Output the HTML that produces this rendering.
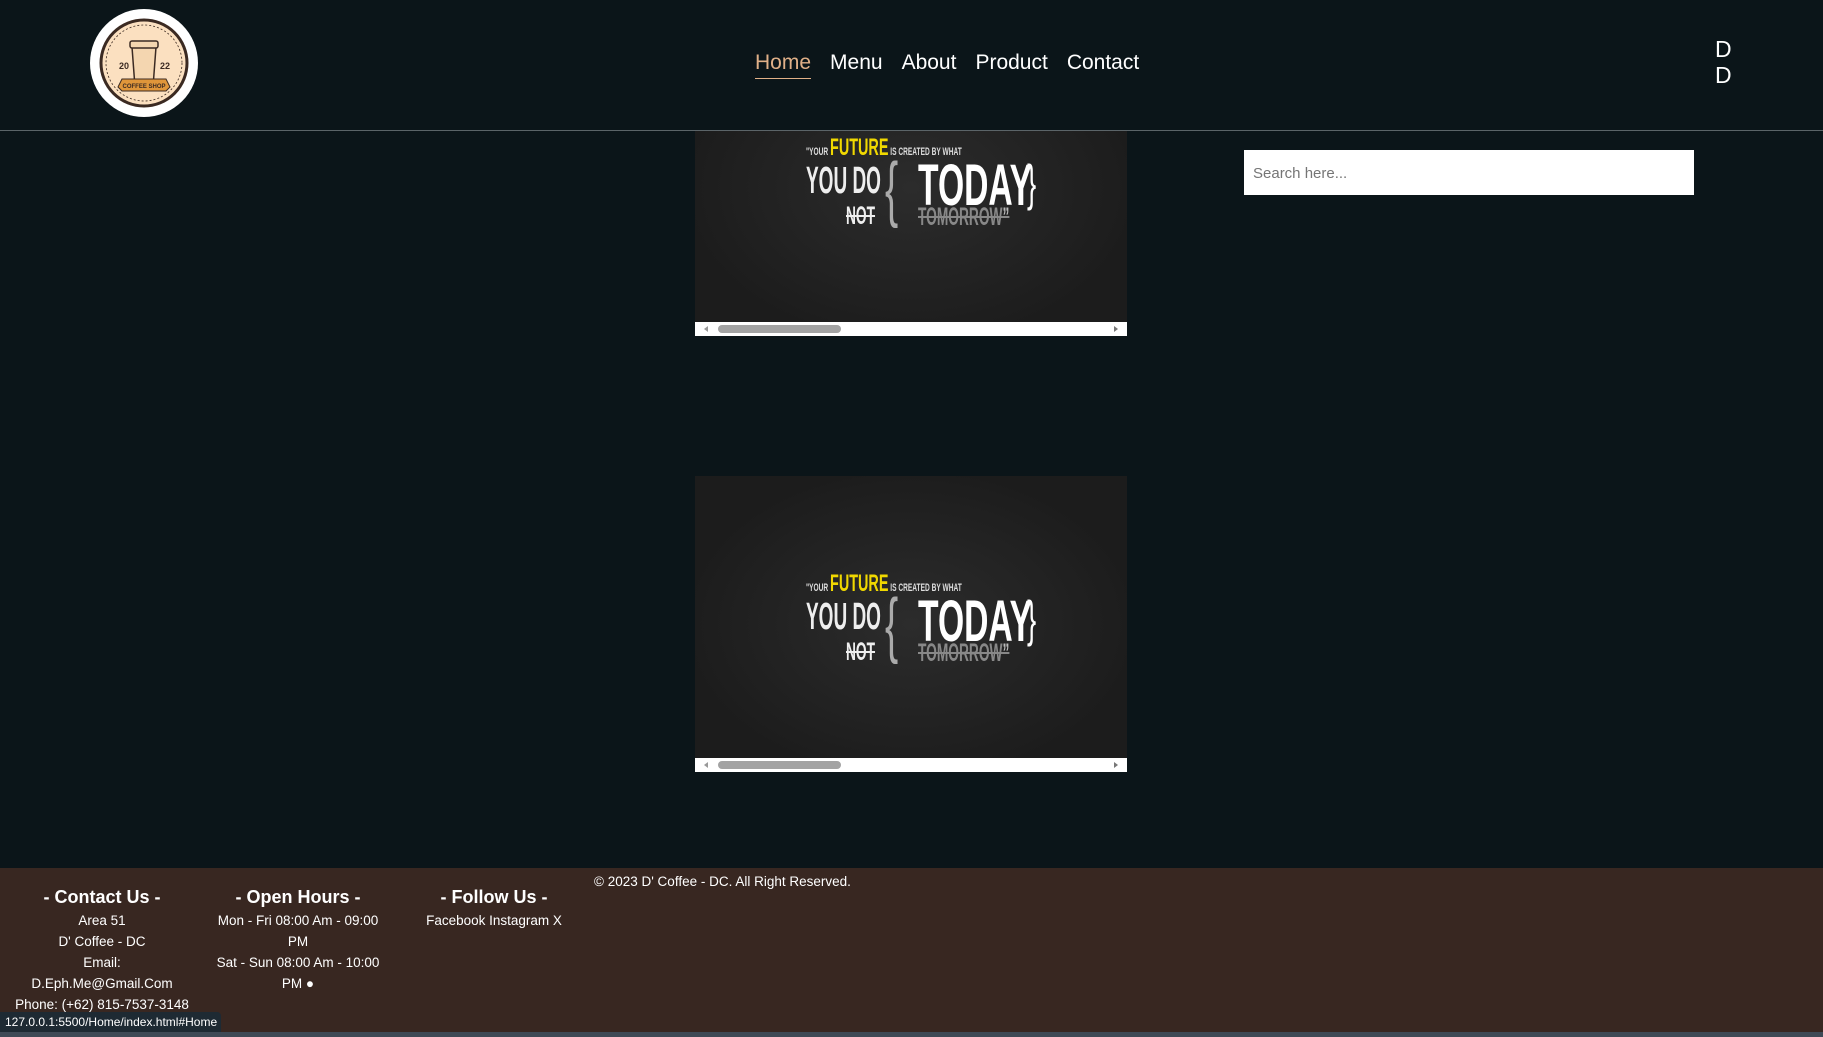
<!DOCTYPE html>
<html><head><meta charset="utf-8"><style>
*{margin:0;padding:0;box-sizing:border-box}
body{width:1823px;height:1037px;overflow:hidden;background:#0b1519;font-family:"Liberation Sans",sans-serif;position:relative;color:#fff}
.hdr{position:absolute;left:0;top:0;width:1823px;height:131px;background:#0b1519;border-bottom:1px solid #5b6468;z-index:5}
.logo{position:absolute;left:90px;top:9px;width:108px;height:108px;border-radius:50%;background:#fff}
.nav{position:absolute;top:51px;left:755px;font-size:21px;white-space:nowrap}
.nav span{margin-right:19px}
.dd{position:absolute;left:1715px;top:36px;font-size:23px;line-height:26px}
.img{position:absolute;left:695px;width:432px;height:296px;background:radial-gradient(ellipse at 50% 50%,#2c2c2c,#1c1c1c 75%);overflow:hidden}
.img .t{position:absolute;font-weight:bold;white-space:nowrap;transform-origin:0 0}
.sb{position:absolute;left:0;bottom:0;width:432px;height:14px;background:#fff}
.sb .th{position:absolute;left:23px;top:3px;width:123px;height:8px;border-radius:4px;background:#a3a3a3}
.search{position:absolute;left:1244px;top:150px;width:450px;height:45px;background:#fff;color:#757575;font-size:15px;padding:15px 9px}
.ft{position:absolute;left:0;top:868px;width:1823px;height:164px;background:#382721}
.col{position:absolute;top:17px;text-align:center;font-size:13.5px;line-height:21px}
.col h4{font-size:18px;line-height:24px;margin-bottom:1px}
.status{position:absolute;left:0;top:1012px;width:221px;height:20px;background:#1e2a33;color:#fff;font-size:12px;padding:3px 5px;border-radius:0 4px 0 0}
.bot{position:absolute;left:0;top:1032px;width:1823px;height:5px;background:#3f4a56}
</style></head><body>
<div class="img" style="top:40px" id="i1"></div>
<div class="img" style="top:476px" id="i2"></div>
<div class="hdr">
<div class="logo"><svg width="108" height="108" viewBox="0 0 108 108"><circle cx="54" cy="54" r="43" fill="#fbe0c0" stroke="#3b2a22" stroke-width="3"/><circle cx="54" cy="54" r="38" fill="none" stroke="#3b2a22" stroke-width="0.8" stroke-dasharray="2 2"/><path d="M42 38h24l-3 40h-18z" fill="#f4d6b0" stroke="#3b2a22" stroke-width="1.5"/><rect x="40" y="32" width="28" height="7" rx="2" fill="#f4d6b0" stroke="#3b2a22" stroke-width="1.5"/><path d="M28 78l4-8h44l4 8-4 4h-44z" fill="#e0963a" stroke="#3b2a22"/><text x="54" y="79" font-size="6" fill="#3b2a22" text-anchor="middle" font-weight="bold">COFFEE SHOP</text><text x="34" y="60" font-size="9" fill="#3b2a22" text-anchor="middle" font-weight="bold">20</text><text x="75" y="60" font-size="9" fill="#3b2a22" text-anchor="middle" font-weight="bold">22</text></svg></div>
<div class="nav"><span style="color:#e0b088;border-bottom:1px solid #e0b088;padding-bottom:4px">Home</span><span>Menu</span><span>About</span><span>Product</span><span>Contact</span></div>
<div class="dd">D<br>D</div>
</div>
<div class="search">Search here...</div>
<div class="ft">
<div class="col" style="left:2px;width:200px"><h4>- Contact Us -</h4>Area 51<br>D' Coffee - DC<br>Email:<br>D.Eph.Me@Gmail.Com<br>Phone: (+62) 815-7537-3148</div>
<div class="col" style="left:214px;width:168px"><h4>- Open Hours -</h4>Mon - Fri 08:00 Am - 09:00 PM<br>Sat - Sun 08:00 Am - 10:00 PM ●</div>
<div class="col" style="left:414px;width:160px"><h4>- Follow Us -</h4>Facebook Instagram X</div>
<div style="position:absolute;left:594px;top:6px;font-size:13.5px">© 2023 D' Coffee - DC. All Right Reserved.</div>
</div>
<div class="status">127.0.0.1:5500/Home/index.html#Home</div>
<div class="bot"></div>
<script>
var h='<div class="t" style="left:111px;top:94px;font-size:11px;color:#ddd;transform:scaleX(.6)">"YOUR <span style="color:#f0d800;font-size:24px">FUTURE</span> IS CREATED BY WHAT</div>'+
'<div class="t" style="left:111px;top:120px;font-size:38px;color:#eee;transform:scaleX(.5)">YOU DO</div>'+
'<div class="t" style="left:190px;top:108px;font-size:72px;color:#aaa;font-weight:normal;transform:scaleX(.55)">{</div>'+
'<div class="t" style="left:223px;top:112px;font-size:58px;color:#fff;transform:scaleX(.58)">TODAY</div>'+
'<div class="t" style="left:332px;top:114px;font-size:50px;color:#fff;font-weight:normal;transform:scaleX(.55)">}</div>'+
'<div class="t" style="left:151px;top:162px;font-size:25px;color:#eee;text-decoration:line-through;transform:scaleX(.55)">NOT</div>'+
'<div class="t" style="left:223px;top:163px;font-size:25px;color:#888;text-decoration:line-through;transform:scaleX(.55)">TOMORROW<span style="color:#bbb">”</span></div>'+
'<div class="sb"><div class="th"></div><div style="position:absolute;left:9px;top:4px;border:3px solid transparent;border-right:4px solid #999;border-left:0"></div><div style="position:absolute;right:9px;top:4px;border:3px solid transparent;border-left:4px solid #777;border-right:0"></div></div>';
document.getElementById('i1').innerHTML=h;document.getElementById('i2').innerHTML=h;
</script>
</body></html>
